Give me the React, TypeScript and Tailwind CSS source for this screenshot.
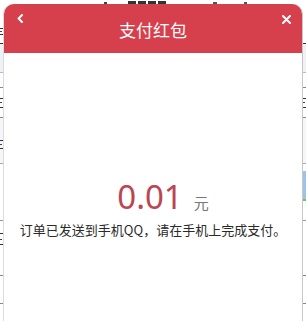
import React from "react";

const cjk = { fontFamily: '"Noto Sans CJK SC", "Noto Sans", sans-serif' };

// little glyph fragments of the page behind, cut off by the window edge
const Mark = ({ h = 9 }: { h?: number }) => (
  <div className="flex w-[3px] flex-col justify-between" style={{ height: h }}>
    <div className="h-[1px] w-[3px] bg-[#333]" />
    <div className="h-[1px] w-[2px] bg-[#444]" />
    <div className="h-[1px] w-[3px] bg-[#333]" />
  </div>
);

// page that sits behind the dialog; only thin strips of it show at the edges
const BackPage = () => {
  return (
    <div className="flex h-full w-full flex-col bg-white">
      <div className="flex h-[4px] items-end gap-[3px] pl-[104px]">
        <div className="h-[2px] w-[3px] bg-[#444]" />
        <div className="ml-[18px] flex gap-[2px]">
          <div className="h-[3px] w-[8px] bg-[#333]" />
          <div className="h-[3px] w-[8px] bg-[#333]" />
          <div className="h-[3px] w-[8px] bg-[#333]" />
          <div className="h-[3px] w-[8px] bg-[#333]" />
        </div>
        <div className="ml-[44px] h-[2px] w-[4px] bg-[#555]" />
        <div className="ml-[24px] h-[2px] w-[3px] bg-[#555]" />
      </div>
      <div className="flex h-[39px] items-end pb-[8px]">
        <Mark h={7} />
      </div>
      <div className="h-[29px] border-t border-[#333] bg-[#eef2f7]" />
      <div className="h-[15px] border-t border-[#bbb]" />
      <div className="flex h-[31px] items-center justify-between border-y border-[#888]">
        <Mark h={10} />
        <Mark h={10} />
      </div>
      <div className="flex h-[46px] items-end border-b border-[#aaa] bg-[#f4f6f9] pb-[14px]">
        <Mark h={9} />
      </div>
      <div className="flex h-[43px] flex-col items-end justify-center">
        <div className="h-[30px] w-[12px] border-b-2 border-[#7cbf5a] bg-[#9fc3e6]" />
      </div>
      <div className="h-[14px] border-b border-[#999]" />
      <div className="flex h-[55px] items-start border-b border-[#888] pt-[12px]">
        <Mark h={12} />
      </div>
      <div className="h-[28px] border-b border-[#888]" />
      <div className="flex-1" />
    </div>
  );
};

const PayDialog = () => {
  return (
    <div className="absolute left-[4px] top-[4px] flex h-[317px] w-[298px] flex-col overflow-hidden rounded-t-[10px] bg-white shadow-[1px_0_0_#c8c8c8,-1px_0_0_#dcdcdc]">
      <div className="grid h-[49px] grid-cols-[40px_1fr_40px] bg-[#d6404c] text-white">
        <div className="pl-[13px] pt-[10px]">
          <svg width="6" height="9" viewBox="0 0 6 9">
            <path d="M5 1 L1.6 4.5 L5 8" fill="none" stroke="#fff" strokeWidth="2" strokeLinecap="round" strokeLinejoin="round" />
          </svg>
        </div>
        <div className="flex items-center justify-center pt-[3px] text-[17px]" style={cjk}>
          支付红包
        </div>
        <div className="flex justify-end pr-[11px] pt-[11px]">
          <svg width="9" height="9" viewBox="0 0 9 9">
            <path d="M1 1 L8 8 M8 1 L1 8" fill="none" stroke="#fff" strokeWidth="2" strokeLinecap="round" />
          </svg>
        </div>
      </div>
      <div className="flex flex-col items-center pt-[127px]">
        <div className="flex items-baseline pl-[20px]">
          <span
            className="text-[33px] leading-none text-[#bb4651]"
            style={{ fontFamily: '"Noto Sans", "Open Sans", sans-serif' }}
          >
            0.01
          </span>
          <span className="ml-[11px] text-[15px] leading-none text-[#777]" style={cjk}>
            元
          </span>
        </div>
        <div className="mt-[7px] text-[13px] leading-[20px] text-[#2a2a2a]" style={cjk}>
          订单已发送到手机QQ，请在手机上完成支付。
        </div>
      </div>
    </div>
  );
};

export default function App() {
  return (
    <div className="relative h-[321px] w-[306px] overflow-hidden bg-white">
      <BackPage />
      <PayDialog />
    </div>
  );
}
